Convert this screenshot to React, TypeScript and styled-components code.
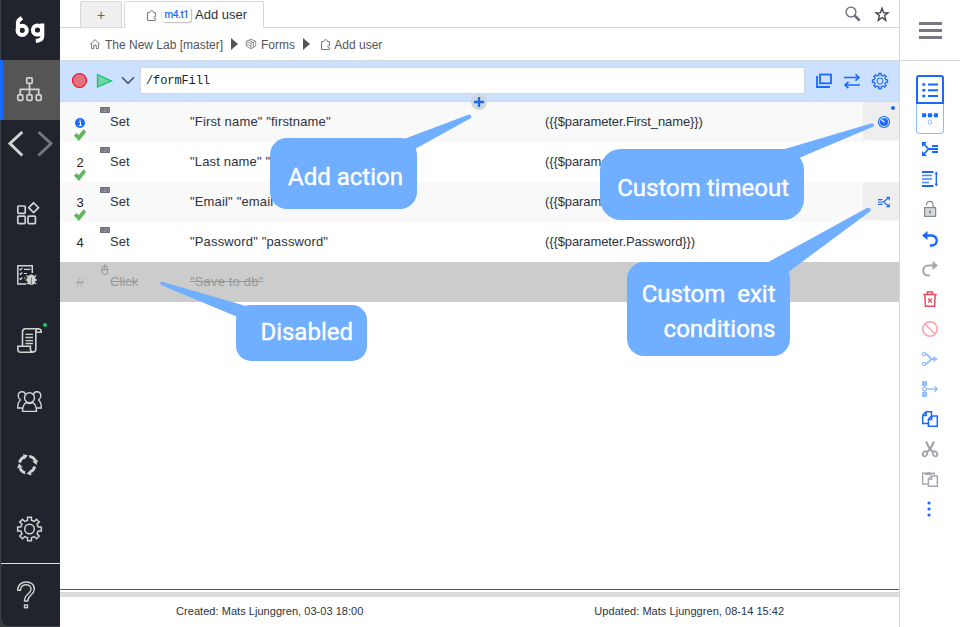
import React from "react";
import styled, { createGlobalStyle } from "styled-components";

const GlobalStyle = createGlobalStyle`
  * { box-sizing: border-box; }
  body { margin: 0; background: #fff; }
  svg { display: block; flex: none; fill: none; overflow: visible; }
`;

const blue = "#1a69ff";
const line = "#d3d9dc";

const Page = styled.div`
  display: grid;
  grid-template-columns: 60px 839px 61px;
  width: 960px;
  height: 627px;
  overflow: hidden;
  font-family: "Liberation Sans", Arial, sans-serif;
  color: #2c3340;
  background: #fff;
`;

/* Sidebar */
const SidebarFrame = styled.div`
  background: #3b3c40;
`;
const Sidebar = styled.nav`
  display: flex;
  flex-direction: column;
  height: 627px;
  background: #21242d;
  border-left: 1px solid #3d414a;
  border-bottom: 1px solid #3d414a;
  border-bottom-left-radius: 9px;
  color: #d2d2d2;
`;
const Logo = styled.div`
  height: 60px;
  padding: 15px 0 0 14px;
`;
const ActiveItem = styled.div`
  height: 60px;
  margin-left: -1px;
  padding: 15px 0 0 13px;
  background: #555;
  border-left: 3px solid ${blue};
`;
const History = styled.div`
  display: flex;
  justify-content: space-between;
  height: 80px;
  padding: 11px 7px 0 7px;
`;
const NavItem = styled.div`
  height: 63px;
  padding-left: 15px;
`;
const Help = styled.div`
  flex: 1;
  margin-top: -15px;
  padding: 17px 0 0 15px;
  border-top: 1px solid #d9dcdf;
`;

/* Main column */
const Main = styled.main`
  display: flex;
  flex-direction: column;
  min-width: 0;
`;
const TabBar = styled.div`
  display: flex;
  height: 28px;
  padding: 1px 0 0 20px;
  border-bottom: 1px solid ${line};
`;
const NewTab = styled.div`
  width: 42px;
  height: 26px;
  margin-right: 2px;
  border: 1px solid ${line};
  border-bottom: 0;
  border-radius: 2px 2px 0 0;
  background: #efefef;
  color: #666;
  font-size: 14px;
  line-height: 27px;
  text-align: center;
`;
const Tab = styled.div`
  display: flex;
  align-items: center;
  width: 140px;
  height: 27px;
  padding-left: 22px;
  border: 1px solid ${line};
  border-bottom: 0;
  border-radius: 2px 2px 0 0;
  background: #fff;
  font-size: 13px;
  line-height: 24px;
`;
const Tag = styled.span`
  width: 29px;
  height: 15px;
  margin: -1px 4px 0 5px;
  border-radius: 3px;
  box-shadow: 0 0 2px #ccc, 1px 1px 1px #bbb;
  color: ${blue};
  font: 500 10px/15px Roboto, sans-serif;
  letter-spacing: -0.4px;
  text-align: center;
`;
const TabTools = styled.div`
  display: flex;
  gap: 14px;
  margin-left: auto;
  padding: 5px 10px 0 0;
`;
const Crumbs = styled.div`
  display: flex;
  align-items: center;
  height: 33px;
  padding-left: 30px;
  border-bottom: 1px solid ${line};
  color: #555;
  font-size: 12px;
  line-height: 32px;
`;
const Crumb = styled.span<{ $w: number }>`
  width: ${(p) => p.$w}px;
  padding-top: 1px;
  white-space: nowrap;
`;
const Arrow = styled.i<{ $gap: number }>`
  width: 0;
  margin-right: ${(p) => p.$gap}px;
  border: solid transparent;
  border-width: 6px 0 6px 7px;
  border-left-color: #555;
`;
const ActionBar = styled.div`
  display: flex;
  align-items: center;
  height: 41px;
  padding: 0 10px 1px 11px;
  background: #cce0ff;
  border-bottom: 1px solid ${line};
`;
const PathField = styled.div`
  width: 665px;
  height: 27px;
  margin: 0 11px 0 5px;
  padding-left: 5px;
  border: 1px solid #d2d8de;
  background: #fff;
  color: #222;
  font: 12px/27px "Liberation Mono", monospace;
  letter-spacing: -0.1px;
`;
const BarTools = styled.div`
  display: flex;
  gap: 12px;
`;

/* Action rows */
const Rows = styled.div`
  position: relative;
  flex: 1;
`;
const Row = styled.div<{ $bg: string; $off?: boolean }>`
  display: grid;
  grid-template-columns: 40px 90px 355px 1fr 36px;
  height: 40px;
  background: ${(p) => p.$bg};
  color: ${(p) => (p.$off ? "#999" : "#2c3340")};
  font-size: 13px;
  line-height: 39px;
  white-space: nowrap;
  text-decoration: ${(p) => (p.$off ? "line-through" : "none")};
`;
const Num = styled.div<{ $off?: boolean }>`
  display: flex;
  flex-direction: column;
  align-items: center;
  padding-top: 15px;
  color: ${(p) => (p.$off ? "#b3b3b3" : "#222")};
  line-height: 12px;
`;
const Command = styled.div`
  display: flex;
`;
const Args = styled.span`
  letter-spacing: 0.16px;
`;
const Param = styled.span`
  letter-spacing: -0.1px;
`;
const Status = styled.div`
  display: flex;
  align-items: center;
  justify-content: center;
  height: 38px;
  padding: 2px 0 0 6px;
  background: #eee;
`;
const Dot = styled.i`
  position: absolute;
  top: 4px;
  right: 4px;
  width: 4px;
  height: 4px;
  border-radius: 50%;
  background: ${blue};
`;
const AddBadge = styled.div`
  position: absolute;
  left: 411px;
  top: -8px;
  display: grid;
  place-items: center;
  width: 16px;
  height: 16px;
  border-radius: 50%;
  background: #d0d8df;
`;
const Footer = styled.footer`
  height: 38px;
  border-top: 1px solid #555;
`;
const Splitter = styled.div`
  height: 5px;
  margin-top: 2px;
  background: #dcdcdc;
`;
const Meta = styled.div`
  display: grid;
  grid-template-columns: 1fr 1fr;
  font-size: 11px;
  line-height: 28px;
  letter-spacing: 0.04px;
  text-align: center;
`;

/* Callouts */
const Callout = styled.div<{ $x: number; $y: number; $w: number; $h: number; $r: number }>`
  position: absolute;
  left: ${(p) => p.$x}px;
  top: ${(p) => p.$y}px;
  width: ${(p) => p.$w}px;
  height: ${(p) => p.$h}px;
  border-radius: ${(p) => p.$r}px;
  background: #70aeff;
`;
const Tail = styled.svg`
  position: absolute;
  left: 0;
  top: 0;
  width: 100%;
  height: 100%;
`;
const CalloutText = styled.div<{ $top: number; $right: number }>`
  position: relative;
  padding: ${(p) => p.$top}px ${(p) => p.$right}px 0 0;
  color: #fff;
  font: 400 24px/35px Roboto, sans-serif;
  -webkit-text-stroke: 0.4px #fff;
  text-align: right;
  white-space: pre;
`;

/* Right rail */
const Rail = styled.aside`
  border-left: 1px solid ${line};
`;
const Menu = styled.div`
  display: flex;
  flex-direction: column;
  gap: 4px;
  height: 61px;
  padding: 22px 0 0 19px;
  border-bottom: 1px solid ${line};
`;
const Bar = styled.i`
  width: 23px;
  height: 3px;
  background: #777982;
`;
const Modes = styled.div`
  width: 28px;
  margin: 14px 0 0 16px;
`;
const Mode = styled.div<{ $on?: boolean }>`
  height: ${(p) => (p.$on ? 29 : 30)}px;
  padding: ${(p) => (p.$on ? "5px 0 0 4px" : "9px 0 0 5px")};
  border: ${(p) => (p.$on ? `2px solid ${blue}` : "1px solid #8bbcff")};
  border-top-width: ${(p) => (p.$on ? 2 : 0)}px;
  border-radius: ${(p) => (p.$on ? "3px 3px 0 0" : "0 0 4px 4px")};
`;
const Tools = styled.div`
  display: flex;
  flex-direction: column;
  padding: 0 0 0 22px;
`;
const Tool = styled.div`
  display: flex;
  align-items: center;
  height: 30px;
`;

type IconProps = { w: number; h?: number; c?: string; s?: number; children: React.ReactNode };
const Icon = ({ w, h = w, c = "currentColor", s = 1, children }: IconProps) => (
  <svg width={w} height={h} viewBox={`0 0 ${w} ${h}`} stroke={c} strokeWidth={s}>
    {children}
  </svg>
);

const gearPath = (cx: number, cy: number, outer: number, inner: number) => {
  const pts: string[] = [];
  for (let i = 0; i < 8; i++) {
    [[-0.22, inner], [-0.16, outer], [0.16, outer], [0.22, inner]].forEach(([d, r]) => {
      const a = (i * Math.PI) / 4 + d;
      pts.push(`${(cx + r * Math.cos(a)).toFixed(2)} ${(cy + r * Math.sin(a)).toFixed(2)}`);
    });
  }
  return `M${pts.join("L")}Z`;
};

const Keyboard = () => (
  <Icon w={10} h={40} c="none">
    <rect y="5" width="10" height="6" rx="1" fill="#6a6e79" />
    <path d="M1.500 6.900h1M3.800 6.900h1M6 6.900h1M8 6.900h1M1.500 9h1M3.600 9h3M8 9h1" stroke="#fff" strokeWidth="1" opacity=".55" />
  </Icon>
);
const Mouse = () => (
  <Icon w={10} h={40} c="#8f8f8f" s={0.9}>
    <rect x="2" y="4" width="5.6" height="8.6" rx="2.5" />
    <path d="M2 7.5h5.6M4.8 2.3v5.2" />
  </Icon>
);
const Check = () => (
  <Icon w={12} c="none">
    <path d="M0 6.800 2.500 4 4.700 6.300 9.500.3 12 3 5 12Z" fill="#5cb85c" />
  </Icon>
);
const Info = () => (
  <Icon w={10} h={12} c="none">
    <circle cx="5" cy="6" r="5" fill={blue} />
    <path d="M3.8 5h1.7v3.5M3.700 8.500h3M4.500 3.100h1.100" stroke="#fff" strokeWidth="1.1" />
  </Icon>
);
const Clip = () => (
  <Icon w={10} h={11} c="#777">
    <path d="M2.700 2.500H1a.5.5 0 0 0-.5.5v7a.5.5 0 0 0 .5.5h7a.5.5 0 0 0 .5-.5V8.600M8.500 8.600C6 9 6 6.200 8.500 6.500V3a.5.5 0 0 0-.5-.5H6.400C6.800.2 2.600.2 2.700 2.500" />
  </Icon>
);

type RowData = {
  n: React.ReactNode; ok?: boolean; cmd: string; args: string; param?: string; bg: string; off?: boolean; status?: React.ReactNode;
};
const rows: RowData[] = [
  {
    n: <Info />, ok: true, cmd: "Set", args: '"First name" "firstname"', param: "({{$parameter.First_name}})", bg: "#f9f9f9",
    status: (
      <Status>
        <Icon w={12} c={blue} s={1.2}>
          <circle cx="6" cy="6" r="5.5" />
          <circle cx="6" cy="6" r="4.1" fill={blue} stroke="none" />
          <path d="M3.2 3.4 6.4 6.2" stroke="#fff" />
          <path d="M6 1v2" stroke="#cfe0ff" strokeWidth=".8" />
        </Icon>
        <Dot />
      </Status>
    ),
  },
  { n: "2", ok: true, cmd: "Set", args: '"Last name" "lastname"', param: "({{$parameter.Last_name}})", bg: "#fff" },
  {
    n: "3", ok: true, cmd: "Set", args: '"Email" "email"', param: "({{$parameter.Email}})", bg: "#f9f9f9",
    status: (
      <Status>
        <Icon w={12} c={blue} s={1.1}>
          <path d="M0 3.700h4.500M0 6h6M0 8.300h4.500" strokeWidth="1.2" />
          <path d="M5.5 6 11 1.5M8.3 1.3h3v3M5.5 6 11 10.5M8.3 10.7h3v-3" />
        </Icon>
      </Status>
    ),
  },
  { n: "4", cmd: "Set", args: '"Password" "password"', param: "({{$parameter.Password}})", bg: "#fff" },
  { n: "//", cmd: "Click", args: '"Save to db"', bg: "#ccc", off: true },
];

const gray = "#a5a8ae";
const pale = "#93bfff";
const tools: React.ReactNode[] = [
  <Icon w={16} c={blue} s={1.8}>
    <path d="M2 3 6.5 8 2 13M6.500 8H16" />
    <path d="M10 5h6M10 11h6" strokeWidth="1.8" />
    <path d="M0 1h5L0 6ZM0 15h5L0 10Z" fill={blue} stroke="none" />
  </Icon>,
  <Icon w={16} c={blue}>
    <path d="M0 1h11.5M0 15h11.5" strokeWidth="2" />
    <path d="M0 4.600h10M0 8h10M0 11.400h7" stroke="#4488ff" strokeWidth="1.5" />
    <path d="M14.3 1.5v13" strokeWidth="1.4" />
    <path d="M12.5 3.2 14.3.5 16 3.2ZM12.5 12.8l1.8 2.7 1.7-2.7Z" fill={blue} stroke="none" />
  </Icon>,
  <Icon w={16} c="#858992" s={1.2}>
    <path d="M4.500 4.500V4C4.500-1 11-.7 11 4v3" />
    <rect x="2.6" y="6.6" width="11" height="8.8" fill="#d8d9db" />
    <path d="M8 9.5v3" strokeWidth="1.8" />
  </Icon>,
  <Icon w={16} c={blue} s={2.4}>
    <path d="M2 4.500h7.500c7 0 7 10 0 10H8" />
    <path d="M5.500 0v9L0 4.500Z" fill={blue} stroke="none" />
  </Icon>,
  <Icon w={16} c={gray} s={2.1}>
    <path d="M14 4.500H6.500c-7 0-7 10 0 10H8" />
    <path d="M10.500 0v9L16 4.500Z" fill={gray} stroke="none" />
  </Icon>,
  <Icon w={16} c="#ef4861" s={1.5}>
    <path d="M1.200 3.400h13.600M5.300 3V1h5.200v2M2.800 3.800l.6 11.500h9.200l.6-11.500" />
    <path d="m6.200 7.500 3.600 4m0-4-3.600 4" strokeWidth="1.2" />
  </Icon>,
  <Icon w={16} c="#f7a8b4" s={1.7}>
    <circle cx="8" cy="8" r="7.2" />
    <path d="m3 3 10 10" />
  </Icon>,
  <Icon w={16} c={pale} s={1.3}>
    <circle cx="2" cy="3" r="1.6" />
    <circle cx="2" cy="13" r="1.6" />
    <path d="M3.700 3.200C7.500 3.600 7 8 10.500 8 7 8 7.500 12.400 3.700 12.800M8 8h6" strokeWidth="1.9" />
    <path d="m11.500 5 4.500 3-4.500 3Z" fill={pale} stroke="none" />
  </Icon>,
  <Icon w={16} c={pale} s={1.3}>
    <path d="M0 0h5v5H0ZM0 11h5v5H0Z" fill={pale} stroke="none" />
    <path d="M2.500 5v1M2.500 10v1M4.700 8h10.500M12.500 5.200 15.400 8l-2.900 2.800" />
    <circle cx="2.5" cy="8" r="1.9" />
  </Icon>,
  <Icon w={16} c={blue} s={1.5}>
    <path d="M6 12.500H.7V4.200L4 .8h5.500v4M4.200.8v3.600H.8" />
    <path d="M6.400 8v7.200h8.900V5H9.500ZM9.700 5v3.400H6.400" />
  </Icon>,
  <Icon w={16} c="#9ea1a7" s={1.7}>
    <ellipse cx="3" cy="12.8" rx="2.100" ry="2.600" transform="rotate(35 3 12.8)" />
    <ellipse cx="13" cy="12.8" rx="2.100" ry="2.600" transform="rotate(-35 13 12.8)" />
    <path d="M4 .5 8 8.500l3.500 2.700M12 .5 8 8.500l-3.500 2.700" strokeWidth="2" />
  </Icon>,
  <Icon w={16} c={gray} s={1.4}>
    <path d="M6 13H.7V2.300h11.600v2" />
    <path d="M3.300 4V2h1.500C5 .2 8 .2 8.200 2h1.500v2Z" fill={gray} stroke="none" />
    <path d="M6.400 8v7.300h8.900V5H9.500ZM9.700 5v3.400H6.400" fill="#fff" />
  </Icon>,
  <Icon w={16} c="none">
    <circle cx="7" cy="2" r="1.6" fill={blue} />
    <circle cx="7" cy="8" r="1.6" fill={blue} />
    <circle cx="7" cy="14" r="1.6" fill={blue} />
  </Icon>,
];

const navIcons: React.ReactNode[] = [
  <Icon w={28} s={1.7}>
    <rect x="1.8" y="6" width="7.4" height="7.4" rx=".8" />
    <rect x="1.8" y="16.2" width="7.4" height="7.4" rx=".8" />
    <rect x="12" y="16.2" width="7.4" height="7.4" rx=".8" />
    <path d="m17.600 2.800 4.900 4.900-4.900 4.900-4.900-4.900Z" />
  </Icon>,
  <Icon w={28} s={1.5}>
    <path d="M10 21H1.800V2.800h14.500V10" />
    <path d="m3.600 6 1 1 1.800-2M3.600 10.500l1 1 1.800-2M3.600 15.500l1 1 1.800-2M8 6.300h6.500M8 10.500h3M8 15h1.500" strokeWidth="1.2" />
    <ellipse cx="15.3" cy="16.800" rx="4.300" ry="5.200" fill="currentColor" stroke="none" />
    <path d="M10.500 12.500l2.500 2M9.700 17h4M10.500 21l3-2M20.200 12.500l-3 2M21 17h-4M20.200 21l-3-2" strokeWidth="1.3" />
    <path d="M15.300 14.500v7" stroke="#21242d" strokeWidth=".6" />
  </Icon>,
  <Icon w={28} s={1.6}>
    <path d="M6.500 19.500V6.200c0-2.200 1-3.400 3-3.400h12.500c2 0 3.300 1 3.300 3.400h-5.500V23c0 4-5.400 4-5.400 0v-2.800H1.800v2.500c0 2 1 3.600 3 3.600h12.300M21.700 2.800c-1.200 0-1.900 1-1.900 3.400" />
    <path d="M9.500 8.300h7.500M9.500 11.500h7.500M9.500 14.700h7.500M9.500 17.500h7.500" strokeWidth="1.3" />
    <circle cx="29" cy="-1" r="2" fill="#1fc76a" stroke="none" />
  </Icon>,
  <Icon w={28} s={1.4}>
    <circle cx="13.5" cy="8.7" r="5" />
    <path d="M6.500 22.400c0-5 1.500-7.600 4-9 1.600 1.200 4.400 1.200 6 0 2.500 1.400 4 4 4 9ZM9.500 5.500c-1-4.500-7.300-3.200-7.300 1.300 0 2 .9 3.200 2.200 4.200C2.500 12.500 1.700 15 1.700 19h4.600M17.500 5.500c1-4.500 7.300-3.200 7.300 1.300 0 2-.9 3.200-2.200 4.200 1.900 1.500 2.700 4 2.700 8h-4.600" />
  </Icon>,
  <Icon w={28} s={2.8}>
    <path d="M3.500 10.500c.8-2.800 2.500-4.700 5-5.600M13.200 4.300c3 .3 5 1.900 6.400 4.600M18.800 14.500c-.8 2.800-2 4.400-4.500 5.300M9.200 20.800c-3-.3-4-1.900-5.400-4.600" />
    <path d="m7 2 5 1.400-3.700 4.200ZM22 8l-1.600 5-4-3.800ZM15.500 23.500l-5-1.700 4-3.700ZM1 16.300l2-4.900 3.800 3.900Z" fill="currentColor" stroke="none" />
  </Icon>,
  <Icon w={28} s={1.5}>
    <path d={gearPath(13.5, 14, 12, 8.9)} />
    <circle cx="13.5" cy="14" r="4.8" />
  </Icon>,
];

export default function App() {
  return (
    <Page>
      <GlobalStyle />
      <SidebarFrame>
        <Sidebar>
          <Logo>
            <Icon w={32} h={30} c="#fff" s={4}>
              <path d="M2.900 16.500V7.500C2.900 5.500 4.500 4.500 7 2.800" />
              <circle cx="7.2" cy="15.300" r="4.600" />
              <circle cx="22.500" cy="15" r="4.600" />
              <path d="M27.300 8.500v12.500c0 3.500-2 4.700-6.500 4.900" />
            </Icon>
          </Logo>
          <ActiveItem>
            <Icon w={28} s={1.7}>
              <rect x="10.7" y="2.8" width="5.5" height="5.5" rx="1" />
              <rect x="1.8" y="19.8" width="5" height="5.5" rx="1" />
              <rect x="11" y="19.8" width="5" height="5.5" rx="1" />
              <rect x="20.2" y="19.8" width="5" height="5.5" rx="1" />
              <path d="M13.500 8.300v11.500M4.300 19.800v-5.500h18.400v5.500" />
            </Icon>
          </ActiveItem>
          <History>
            <Icon w={16} h={26} s={3}><path d="M14.300 1 2 12.500 14.300 24.500" /></Icon>
            <Icon w={16} h={26} c="#75777c" s={3}><path d="M1.500 1 14 12.500 1.500 24.500" /></Icon>
          </History>
          {navIcons.map((icon, i) => <NavItem key={i}>{icon}</NavItem>)}
          <Help>
            <Icon w={20} h={28} s={1.4}>
              <path d="M1.700 9.300C1.400-1.700 19-1.700 18.300 8.500c-.3 6-6.500 5.200-6.500 11.500H8.500c0-7.500 6.400-6.700 6.500-11.700C15.200 2 4.700 2 4.500 9.300Z" />
              <rect x="8.500" y="24" width="3" height="2.700" />
            </Icon>
          </Help>
        </Sidebar>
      </SidebarFrame>

      <Main>
        <TabBar>
          <NewTab>+</NewTab>
          <Tab>
            <Clip />
            <Tag>m4.t1</Tag>
            Add user
          </Tab>
          <TabTools>
            <Icon w={16} c="#666b75" s={1.3}>
              <circle cx="6" cy="6" r="4.9" />
              <path d="m9.700 9.700 5 5" strokeWidth="2.6" />
            </Icon>
            <Icon w={14} h={16} c="#3b404b" s={1.3}>
              <path d="m7 2.300 1.600 4.500H13L9.600 9.500l1.200 4.800L7 11.500l-3.800 2.800 1.200-4.800L1 6.800h4.400Z" />
            </Icon>
          </TabTools>
        </TabBar>
        <Crumbs>
          <Icon w={15} h={10} c="#777">
            <path d="M.3 5.300 5 .6l4.700 4.700M1.600 4.500v5h2.200V6.200h2.400v3.300h2.200v-5" />
          </Icon>
          <Crumb $w={126}>The New Lab [master]</Crumb>
          <Arrow $gap={8} />
          <Icon w={15} h={10} c="#888" s={0.9}>
            <path d="m5 .3 4.700 1.900v5L5 9.700.3 7.200v-5ZM.3 2.300 5 4.500l4.700-2.200M5 4.500v5M2.600 1.200l4.800 2.200v4.800M.3 4.800 5 7" />
          </Icon>
          <Crumb $w={42}>Forms</Crumb>
          <Arrow $gap={11} />
          <Clip />
          <Crumb $w={60}>&nbsp;Add user</Crumb>
        </Crumbs>
        <ActionBar>
          <Icon w={16} c="#f2101c" s={1.2}>
            <circle cx="8.5" cy="7.5" r="7" fill="#e2737f" />
          </Icon>
          <Icon w={35} h={16} c="#14c56c" s={1.3}>
            <path d="M10.500 1.500v12.600L24.400 8Z" fill="#70d3a5" />
          </Icon>
          <Icon w={13} h={16} c="#3e4658" s={1.4}>
            <path d="m0 4.300 6 6 6-6" />
          </Icon>
          <PathField>/formFill</PathField>
          <BarTools>
            <Icon w={16} c={blue} s={1.8}>
              <path d="M1 3v11h13" />
              <rect x="4" y="1.5" width="11" height="8.8" />
            </Icon>
            <Icon w={16} c={blue} s={1.6}>
              <path d="M0 4.500h15M11.500 1.300 15 4.500l-3.500 3.200M16 12H1M4.500 8.800 1 12l3.500 3.200" />
            </Icon>
            <Icon w={16} c={blue}>
              <path d={gearPath(8, 8, 7.6, 5.9)} strokeWidth="1.3" />
              <circle cx="8" cy="8" r="3" />
            </Icon>
          </BarTools>
        </ActionBar>

        <Rows>
          {rows.map((r, i) => (
            <Row key={i} $bg={r.bg} $off={r.off}>
              <Num $off={r.off}>
                {r.n}
                {r.ok && <Check />}
              </Num>
              <Command>
                {r.off ? <Mouse /> : <Keyboard />}
                <span>{r.cmd}</span>
              </Command>
              <Args>{r.args}</Args>
              <Param>{r.param}</Param>
              {r.status}
            </Row>
          ))}
          <AddBadge>
            <Icon w={10} c={blue} s={2.3}><path d="M5 0v10M0 5h10" /></Icon>
          </AddBadge>

          <Callout $x={209.5} $y={36} $w={147} $h={71} $r={17}>
            <Tail><path d="M126 4 199-23.500Q202.500-23 201-20L136 16Z" fill="#70aeff" /></Tail>
            <CalloutText $top={22} $right={13.5}>Add action</CalloutText>
          </Callout>
          <Callout $x={539.5} $y={46.500} $w={204.500} $h={71.500} $r={21}>
            <Tail><path d="M178 2 271-25.500Q275.500-26 273.500-22.500L199 9 190 15Z" fill="#70aeff" /></Tail>
            <CalloutText $top={22} $right={15}>Custom timeout</CalloutText>
          </Callout>
          <Callout $x={566.5} $y={160} $w={163} $h={94} $r={17}>
            <Tail><path d="M134 4 240-54Q245.500-54.500 243-50.500L160 11 150 15Z" fill="#70aeff" /></Tail>
            <CalloutText $top={15} $right={14}>{"Custom  exit\nconditions"}</CalloutText>
          </Callout>
          <Callout $x={175.5} $y={202.500} $w={131} $h={56} $r={15}>
            <Tail><path d="M1.500 12-75-20Q-77-24-73-23L10 1 14 10Z" fill="#70aeff" /></Tail>
            <CalloutText $top={10} $right={13.5}>Disabled</CalloutText>
          </Callout>
        </Rows>

        <Footer>
          <Splitter />
          <Meta>
            <span>Created: Mats Ljunggren, 03-03 18:00</span>
            <span>Updated: Mats Ljunggren, 08-14 15:42</span>
          </Meta>
        </Footer>
      </Main>

      <Rail>
        <Menu>
          <Bar />
          <Bar />
          <Bar />
        </Menu>
        <Modes>
          <Mode $on>
            <Icon w={16} c={blue} s={1.9}>
              <path d="M6 2.500h10M6 8.300h10M6 14h10" />
              <path d="M.3 2.500h3M.3 8.300h3M.3 14h3" strokeWidth="2.6" />
            </Icon>
          </Mode>
          <Mode>
            <Icon w={16} h={12} c={blue}>
              <path d="M0 2.200h4M6 2.200h4M12 2.200h4" strokeWidth="4" />
              <path d="M4 2.200h8" opacity=".5" />
              <ellipse cx="8" cy="9" rx="1.800" ry="2.200" stroke={pale} />
            </Icon>
          </Mode>
        </Modes>
        <Tools>
          {tools.map((t, i) => <Tool key={i}>{t}</Tool>)}
        </Tools>
      </Rail>
    </Page>
  );
}
